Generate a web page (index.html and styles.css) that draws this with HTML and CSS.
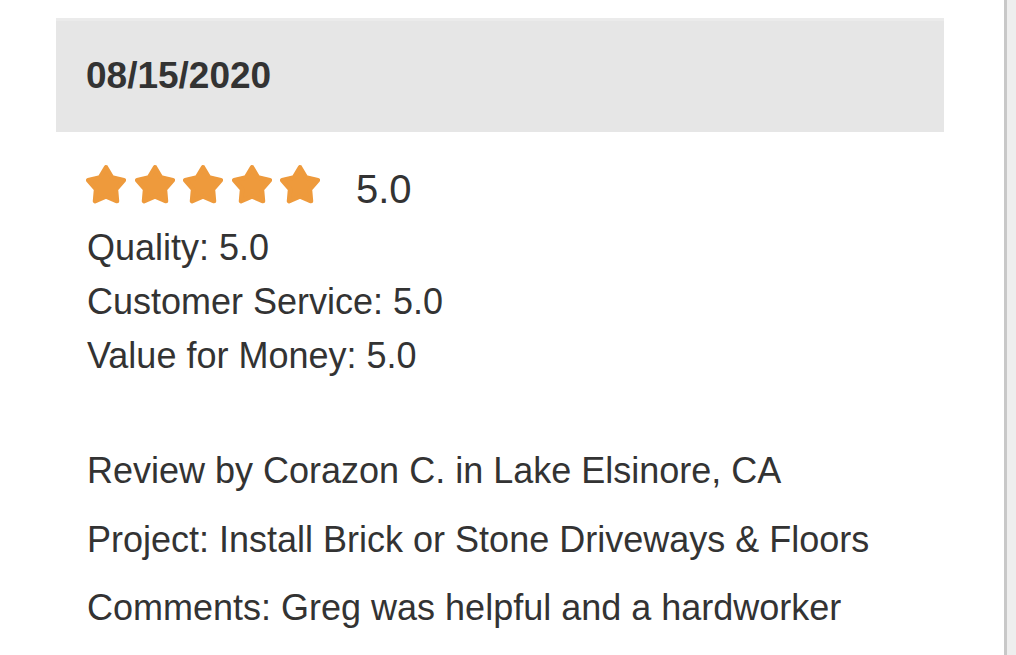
FILE: index.html
```html
<!DOCTYPE html>
<html lang="en">
<head>
<meta charset="utf-8">
<title>Review</title>
<link rel="stylesheet" href="styles.css">
</head>
<body>
<div class="frame">
  <main class="page">
    <section class="review">
      <header class="review-head">
        <h2 class="review-date">08/15/2020</h2>
      </header>
      <div class="rating">
        <div class="stars">
          <svg class="star" viewBox="0 0 40 39"><path d="M20 2.3 L26.14 12.55 L37.8 15.2 L29.94 24.23 L31 36.1 L20 31.45 L9 36.1 L10.06 24.23 L2.2 15.2 L13.86 12.55 Z"/></svg>
          <svg class="star" viewBox="0 0 40 39"><path d="M20 2.3 L26.14 12.55 L37.8 15.2 L29.94 24.23 L31 36.1 L20 31.45 L9 36.1 L10.06 24.23 L2.2 15.2 L13.86 12.55 Z"/></svg>
          <svg class="star" viewBox="0 0 40 39"><path d="M20 2.3 L26.14 12.55 L37.8 15.2 L29.94 24.23 L31 36.1 L20 31.45 L9 36.1 L10.06 24.23 L2.2 15.2 L13.86 12.55 Z"/></svg>
          <svg class="star" viewBox="0 0 40 39"><path d="M20 2.3 L26.14 12.55 L37.8 15.2 L29.94 24.23 L31 36.1 L20 31.45 L9 36.1 L10.06 24.23 L2.2 15.2 L13.86 12.55 Z"/></svg>
          <svg class="star" viewBox="0 0 40 39"><path d="M20 2.3 L26.14 12.55 L37.8 15.2 L29.94 24.23 L31 36.1 L20 31.45 L9 36.1 L10.06 24.23 L2.2 15.2 L13.86 12.55 Z"/></svg>
        </div>
        <span class="rating-value">5.0</span>
      </div>
      <ul class="scores">
        <li>Quality: 5.0</li>
        <li>Customer Service: 5.0</li>
        <li>Value for Money: 5.0</li>
      </ul>
      <div class="details">
        <p>Review by Corazon C. in Lake Elsinore, CA</p>
        <p>Project: Install Brick or Stone Driveways &amp; Floors</p>
        <p>Comments: Greg was helpful and a hardworker</p>
      </div>
    </section>
  </main>
  <div class="scrollbar"></div>
</div>
</body>
</html>
```

FILE: styles.css
```css
html, body {
  margin: 0;
  padding: 0;
  height: 100%;
  overflow: hidden;
  background: #ffffff;
}

body {
  font-family: "Liberation Sans", Arial, Helvetica, sans-serif;
  color: #333333;
}

.frame {
  display: flex;
  height: 655px;
}

.page {
  flex: 1;
  min-width: 0;
}

.review {
  margin: 18px 0 0 56px;
  width: 888px;
}

.review-head {
  background: #e6e6e6;
  border-top: 3px solid #ebebeb;
  padding: 28px 30px 29px;
}

.review-date {
  margin: 0;
  font-size: 37px;
  line-height: 54px;
  font-weight: bold;
  color: #333333;
}

.rating {
  display: flex;
  align-items: flex-start;
  margin: 33px 0 0 30px;
}

.stars {
  display: flex;
  gap: 8.5px;
}

.star {
  width: 40px;
  height: 39px;
  display: block;
}

.star path {
  fill: #ee9a3c;
  stroke: #ee9a3c;
  stroke-width: 4.5;
  stroke-linejoin: round;
}

.rating-value {
  margin-left: 36px;
  padding-top: 4px;
  font-size: 40px;
  line-height: 40px;
}

.scores {
  list-style: none;
  margin: 12px 0 0 0;
  padding: 0 0 0 31px;
  font-size: 36px;
  line-height: 54px;
}

.details {
  margin-top: 54px;
  padding-left: 31px;
  font-size: 36px;
  line-height: 68.5px;
}

.details p {
  margin: 0;
}

.scrollbar {
  width: 9px;
  flex: none;
  border-left: 3px solid #c8c8c8;
  background: #eeeeee;
}
```
